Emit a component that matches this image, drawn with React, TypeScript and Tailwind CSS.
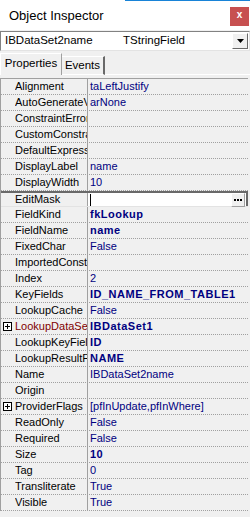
import React from 'react';

type Row = {
  name: string;
  value?: string;
  bold?: boolean;
  plus?: boolean;
  ref?: boolean;
  selected?: boolean;
};

const rows: Row[] = [
  { name: 'Alignment', value: 'taLeftJustify' },
  { name: 'AutoGenerateValue', value: 'arNone' },
  { name: 'ConstraintErrorMessage' },
  { name: 'CustomConstraint' },
  { name: 'DefaultExpression' },
  { name: 'DisplayLabel', value: 'name' },
  { name: 'DisplayWidth', value: '10' },
  { name: 'EditMask', selected: true },
  { name: 'FieldKind', value: 'fkLookup', bold: true },
  { name: 'FieldName', value: 'name', bold: true },
  { name: 'FixedChar', value: 'False' },
  { name: 'ImportedConstraint' },
  { name: 'Index', value: '2' },
  { name: 'KeyFields', value: 'ID_NAME_FROM_TABLE1', bold: true },
  { name: 'LookupCache', value: 'False' },
  { name: 'LookupDataSet', value: 'IBDataSet1', bold: true, plus: true, ref: true },
  { name: 'LookupKeyFields', value: 'ID', bold: true },
  { name: 'LookupResultField', value: 'NAME', bold: true },
  { name: 'Name', value: 'IBDataSet2name' },
  { name: 'Origin' },
  { name: 'ProviderFlags', value: '[pfInUpdate,pfInWhere]', plus: true },
  { name: 'ReadOnly', value: 'False' },
  { name: 'Required', value: 'False' },
  { name: 'Size', value: '10', bold: true },
  { name: 'Tag', value: '0' },
  { name: 'Transliterate', value: 'True' },
  { name: 'Visible', value: 'True' },
];

const PlusBox = () => (
  <svg width="9" height="9" viewBox="0 0 9 9" className="block">
    <rect x="0.5" y="0.5" width="8" height="8" fill="#fff" stroke="#000" />
    <path d="M2 4.5h5M4.5 2v5" stroke="#000" />
  </svg>
);

const PropRow = ({ row }: { row: Row }) => {
  if (row.selected) {
    return (
      <div className="flex h-4 border-t-2 border-t-[#696969] border-b border-b-[#e3e3e3]">
        <div className="w-[87px] shrink-0 flex items-center overflow-hidden whitespace-nowrap border-r border-[#a0a0a0] pl-[14px] text-black">
          {row.name}
        </div>
        <div className="flex-1 flex items-center bg-white border-r-2 border-[#696969]">
          <div className="ml-[2px] w-px h-[12px] bg-black" />
          <div className="ml-auto h-[14px] w-[14px] mr-px bg-[#f0f0f0] border border-t-white border-l-white border-r-[#a0a0a0] border-b-[#a0a0a0] flex items-center justify-center gap-px">
            <span className="w-[2px] h-[2px] bg-black" />
            <span className="w-[2px] h-[2px] bg-black" />
            <span className="w-[2px] h-[2px] bg-black" />
          </div>
        </div>
      </div>
    );
  }
  return (
    <div className="flex h-4 border-b border-dotted border-[#a0a0a0]">
      <div className="w-[87px] shrink-0 flex items-center border-r border-[#a0a0a0]">
        <div className="w-[14px] shrink-0 flex items-center pl-[2px]">{row.plus && <PlusBox />}</div>
        <span
          className={
            row.ref
              ? 'min-w-0 flex-1 overflow-hidden whitespace-nowrap text-[#800000]'
              : 'min-w-0 flex-1 overflow-hidden whitespace-nowrap text-black'
          }
        >
          {row.name}
        </span>
      </div>
      <div
        className={
          row.bold
            ? 'flex-1 flex items-center pl-[2px] whitespace-nowrap overflow-hidden text-[#000080] font-bold tracking-[0.5px]'
            : 'flex-1 flex items-center pl-[2px] whitespace-nowrap overflow-hidden text-[#000080]'
        }
      >
        {row.value}
      </div>
    </div>
  );
};

export default function App() {
  return (
    <div className="w-[250px] h-[517px] bg-[#f0f0f0] overflow-hidden font-['Liberation_Sans',Arial,sans-serif] text-[11px] leading-none select-none">
      {/* title bar */}
      <div className="h-[30px] bg-white flex flex-col">
        <div className="flex h-px">
          <div className="w-[125px] bg-white" />
          <div className="flex-1 bg-[#1883d7]" />
        </div>
        <div className="flex-1 flex items-center justify-between pl-[9px] pr-px">
          <span className="text-[13px] text-black">Object Inspector</span>
          <div className="w-[19px] h-[19px] mt-[1px] bg-[#c75050] flex items-center justify-center text-white text-[10px] font-bold pb-[2px]">
            x
          </div>
        </div>
      </div>

      {/* component combo */}
      <div className="mt-px h-[20px] bg-white border border-t-[#828282] border-l-[#828282] border-r-[#e3e3e3] border-b-[#e3e3e3] flex items-center text-[11.5px] text-black">
        <span className="w-[122px] pl-[4px]">IBDataSet2name</span>
        <span className="flex-1">TStringField</span>
        <div className="w-[16px] h-[16px] mr-px bg-[#f0f0f0] border border-t-white border-l-white border-r-[#696969] border-b-[#696969] flex items-center justify-center">
          <svg width="7" height="4" viewBox="0 0 7 4">
            <path d="M0 0h7L3.5 4z" fill="#000" />
          </svg>
        </div>
      </div>

      {/* tabs */}
      <div className="mt-[2px] h-[22px] flex items-end text-[11.5px] text-black">
        <div className="w-[62px] h-[22px] border-l border-t border-white border-r border-r-[#a0a0a0] flex items-center justify-center pb-[2px]">
          Properties
        </div>
        <div className="w-[43px] h-[19px] border-t border-t-white border-r-2 border-r-[#696969] border-b border-b-white flex items-center justify-center">
          Events
        </div>
        <div className="flex-1 border-b border-white" />
      </div>

      {/* grid */}
      <div className="mt-[3px] border-t border-l border-[#a0a0a0] mr-[2px]">
        {rows.map((r) => (
          <PropRow key={r.name} row={r} />
        ))}
      </div>
    </div>
  );
}
